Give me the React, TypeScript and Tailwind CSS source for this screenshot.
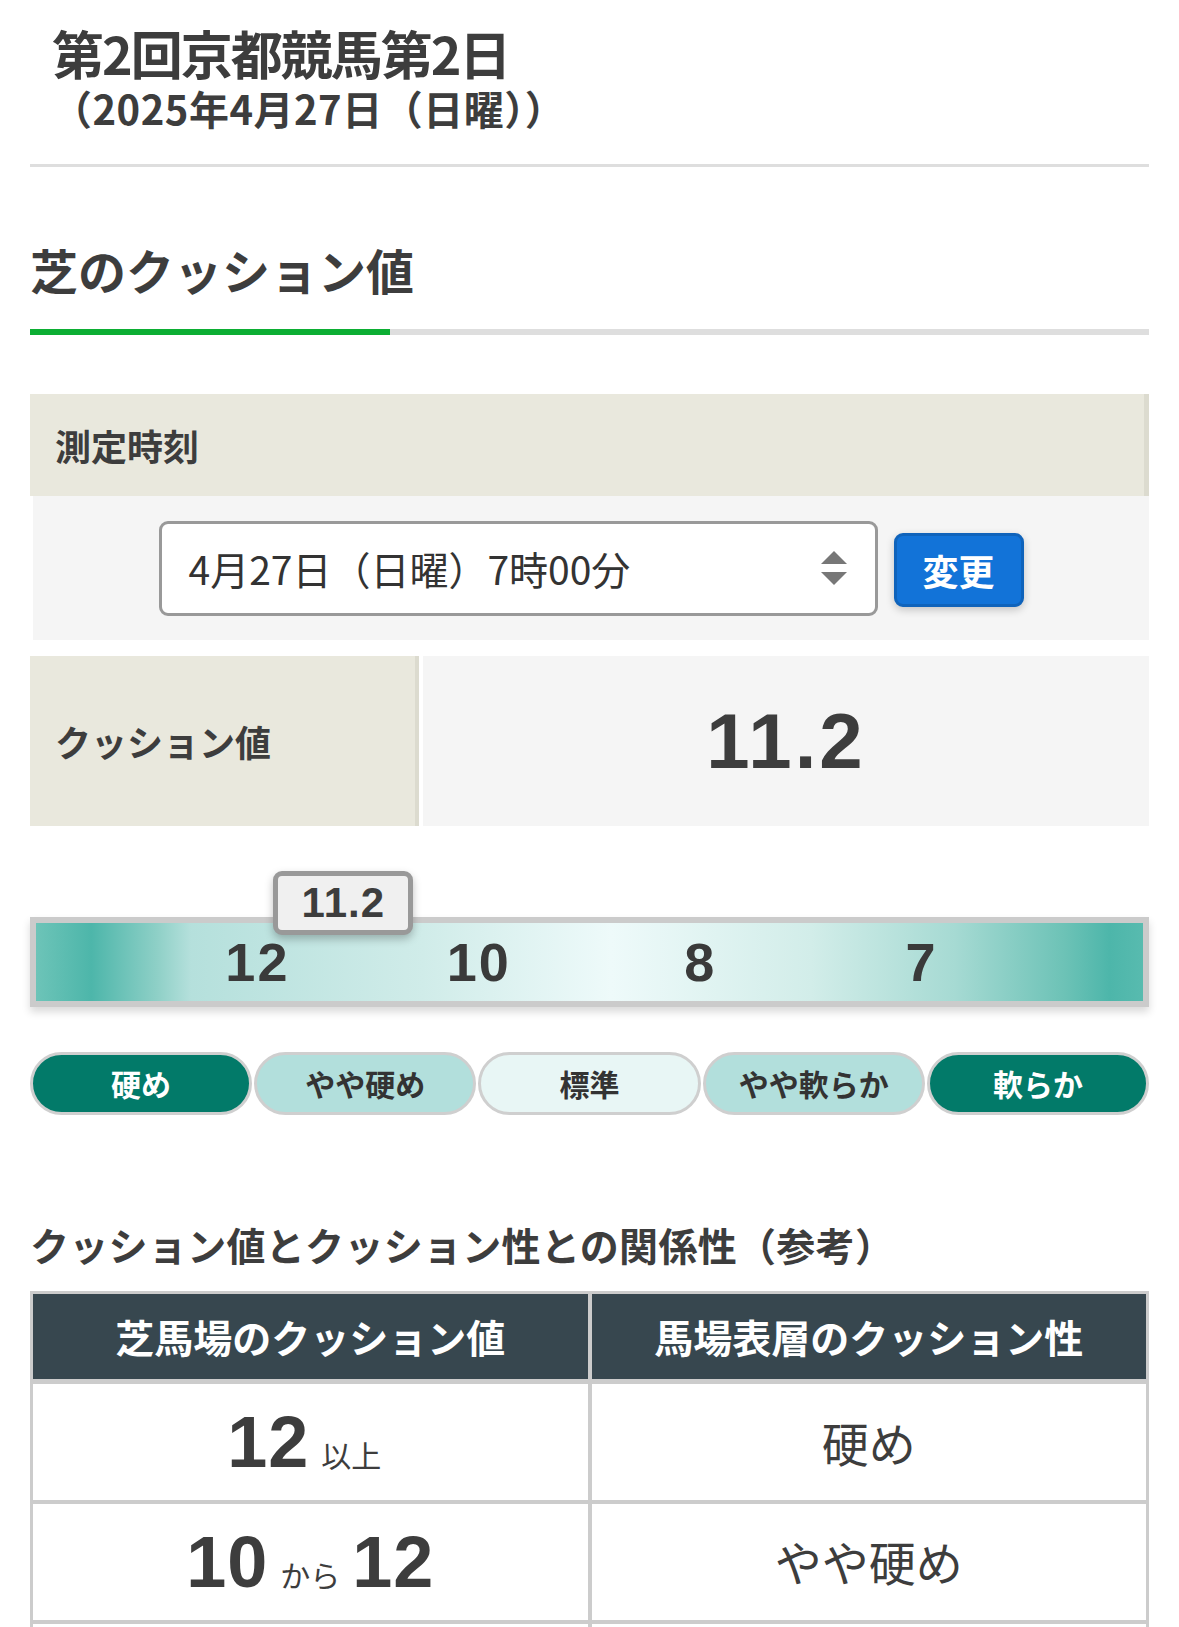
import React from "react";

const JP = { fontFamily: '"Noto Sans CJK JP", "Noto Sans", sans-serif' };
const NUM = { fontFamily: '"Liberation Sans", Arial, sans-serif' };

const levels = [
  { label: "硬め", cls: "bg-[#027a69] text-white" },
  { label: "やや硬め", cls: "bg-[#b2dfdc] text-[#333]" },
  { label: "標準", cls: "bg-[#e8f6f5] text-[#333]" },
  { label: "やや軟らか", cls: "bg-[#b2dfdc] text-[#333]" },
  { label: "軟らか", cls: "bg-[#027a69] text-white" },
];

const rows = [
  { from: "12", mid: "以上", to: "", text: "硬め" },
  { from: "10", mid: "から", to: "12", text: "やや硬め" },
  { from: "8", mid: "から", to: "10", text: "標準" },
  { from: "7", mid: "から", to: "8", text: "やや軟らか" },
  { from: "7", mid: "以下", to: "", text: "軟らか" },
];

const App: React.FC = () => {
  const value = 11.2;
  // 12 sits at 20%, 10 at 40%, 8 at 60%, 7 at 80%
  const pos = 20 + ((12 - value) / 2) * 20;

  return (
    <div className="min-h-screen bg-white px-[30px] text-[#3d3d3d]" style={JP}>
      <div className="pl-[22px] pt-[23px] font-bold">
        <h1 className="text-[52px] leading-[60px] tracking-[-2px]">第2回京都競馬第2日</h1>
        <p className="text-[40px] leading-[50px] tracking-[0.5px]">（2025年4月27日（日曜））</p>
      </div>
      <div className="mt-[31px] h-[3px] bg-[#dedede]" />

      <div className="relative mt-[66px] border-b-[6px] border-[#dedede] pb-[24px]">
        <h2 className="text-[48px] font-bold leading-[72px]">芝のクッション値</h2>
        <div className="absolute bottom-[-6px] left-0 h-[6px] w-[360px] bg-[#0cae33]" />
      </div>

      <div className="mt-[59px] flex h-[102px] items-center border-r-[5px] border-[#dcdbcf] bg-[#e9e8dd] pl-[25px]">
        <span className="text-[36px] font-bold">測定時刻</span>
      </div>
      <div className="ml-[3px] flex h-[144px] items-center justify-center gap-[16px] bg-[#f5f5f5]">
        <div className="flex h-[95px] w-[719px] items-center justify-between rounded-[9px] border-[3px] border-[#999] bg-white pl-[27px] pr-[28px]">
          <span className="text-[39px] text-[#333]">4月27日（日曜）7時00分</span>
          <svg width="26" height="34" viewBox="0 0 26 34">
            <polygon points="13,0 26,13 0,13" fill="#777" />
            <polygon points="0,21 26,21 13,34" fill="#777" />
          </svg>
        </div>
        <button className="mt-[3px] flex h-[74px] w-[130px] items-center justify-center rounded-[9px] border-[3px] border-[#0f63bb] bg-[#1273d8] text-[36px] font-bold text-white shadow-[0_3px_8px_rgba(0,0,0,0.2)]">
          変更
        </button>
      </div>

      <div className="mt-[16px] flex h-[170px] gap-[4px]">
        <div className="flex w-[389px] items-center border-r-[4px] border-[#dcdbcf] bg-[#e9e8dd] pl-[25px]">
          <span className="text-[36px] font-bold">クッション値</span>
        </div>
        <div className="flex flex-1 items-center justify-center bg-[#f5f5f5]">
          <span className="text-[78px] font-bold tracking-[3px]" style={NUM}>
            11.2
          </span>
        </div>
      </div>

      <div className="relative mt-[45px] pt-[46px]">
        <div
          className="absolute top-0 z-10 flex h-[64px] w-[140px] -translate-x-1/2 items-center justify-center rounded-[9px] border-[5px] border-[#999] bg-[#f0f0f0] shadow-[0_4px_8px_rgba(0,0,0,0.25)]"
          style={{ left: `${pos}%` }}
        >
          <span className="text-[42px] font-bold leading-none tracking-[1px]" style={NUM}>
            11.2
          </span>
        </div>
        <div className="border-[6px] border-[#cbcbcb] shadow-[0_5px_8px_rgba(0,0,0,0.15)]">
          <div className="grid h-[78px] grid-cols-4 items-center bg-[linear-gradient(to_right,#6dc4b8_0%,#4db6aa_5%,#8fd0c7_11%,#b5e0dc_14%,#d0ece9_35%,#eefafa_52%,#d2ede9_70%,#a6dad3_83%,#6cc2b6_93%,#4db6aa_97%,#58bbaf_100%)] px-[10%] text-center">
            {["12", "10", "8", "7"].map((n) => (
              <span key={n} className="text-[54px] font-bold leading-none tracking-[2px] text-[#3a3a3a]" style={NUM}>
                {n}
              </span>
            ))}
          </div>
        </div>
      </div>

      <div className="mt-[45px] grid grid-cols-5 gap-[2px]">
        {levels.map((l) => (
          <div
            key={l.label}
            className={`flex h-[63px] items-center justify-center rounded-full border-[3px] border-[#cfcfcf] text-[30px] font-bold ${l.cls}`}
          >
            {l.label}
          </div>
        ))}
      </div>

      <h3 className="mt-[101px] text-[39px] font-bold leading-[57px] tracking-[0.3px]">
        クッション値とクッション性との関係性（参考）
      </h3>

      <table className="mt-[18px] w-full table-fixed border-collapse border-[3px] border-[#ccc]">
        <thead>
          <tr className="bg-[#37474f] text-white">
            <th className="h-[89px] border-b-[5px] border-r-[4px] border-[#ccc] text-[39px] font-bold">
              芝馬場のクッション値
            </th>
            <th className="h-[89px] border-b-[5px] border-[#ccc] text-[39px] font-bold">
              馬場表層のクッション性
            </th>
          </tr>
        </thead>
        <tbody>
          {rows.map((r, i) => (
            <tr key={i} className="border-b-[4px] border-[#ccc]">
              <td className="h-[120px] border-r-[4px] border-[#ccc] text-center">
                <span className="text-[72px] font-bold leading-none tracking-[1px]" style={NUM}>
                  {r.from}
                </span>
                <span className="mx-[12px] text-[30px]">{r.mid}</span>
                {r.to && (
                  <span className="text-[72px] font-bold leading-none tracking-[1px]" style={NUM}>
                    {r.to}
                  </span>
                )}
              </td>
              <td className="h-[120px] text-center text-[47px]">{r.text}</td>
            </tr>
          ))}
        </tbody>
      </table>
      <div className="h-[60px]" />
    </div>
  );
};

export default App;
